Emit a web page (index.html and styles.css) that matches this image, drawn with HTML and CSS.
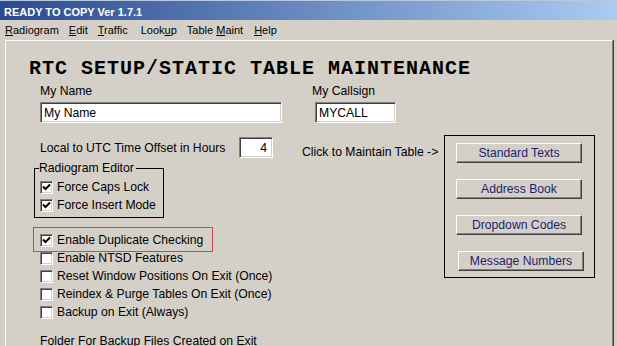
FILE: index.html
```html
<!DOCTYPE html>
<html lang="en">
<head>
    <meta charset="UTF-8">
    <title>READY TO COPY Ver 1.7.1</title>
    <link rel="stylesheet" href="styles.css">
</head>
<body>
    <div class="titlebar">READY TO COPY Ver 1.7.1</div>
    <div class="menubar">
        <span class="menu-item"><u>R</u>adiogram</span>
        <span class="menu-item"><u>E</u>dit</span>
        <span class="menu-item"><u>T</u>raffic</span>
        <span class="menu-item menu-wide">Look<u>u</u>p</span>
        <span class="menu-item">Table <u>M</u>aint</span>
        <span class="menu-item menu-help"><u>H</u>elp</span>
    </div>

    <div class="panel">
        <h1 class="title">RTC SETUP/STATIC TABLE MAINTENANCE</h1>

        <div class="top-row">
            <div class="field field-name">
                <label for="myName">My Name</label>
                <input type="text" id="myName" class="text-input name-input" value="My Name">
            </div>
            <div class="field field-call">
                <label for="myCall">My Callsign</label>
                <input type="text" id="myCall" class="text-input call-input" value="MYCALL">
            </div>
        </div>

        <div class="main">
            <div class="left">
                <div class="offset-row">
                    <label for="utcOffset" class="offset-label">Local to UTC Time Offset in Hours</label>
                    <input type="text" id="utcOffset" class="text-input offset-input" value="4">
                </div>

                <fieldset class="group">
                    <legend>Radiogram Editor</legend>
                    <div class="check-row"><span class="check checked"></span>Force Caps Lock</div>
                    <div class="check-row"><span class="check checked"></span>Force Insert Mode</div>
                </fieldset>

                <div class="checks">
                    <div class="check-row highlight"><span class="check checked"></span>Enable Duplicate Checking</div>
                    <div class="check-row"><span class="check"></span>Enable NTSD Features</div>
                    <div class="check-row"><span class="check"></span>Reset Window Positions On Exit (Once)</div>
                    <div class="check-row"><span class="check"></span>Reindex &amp; Purge Tables On Exit (Once)</div>
                    <div class="check-row"><span class="check"></span>Backup on Exit (Always)</div>
                </div>

                <div class="folder-label">Folder For Backup Files Created on Exit</div>
            </div>

            <div class="right">
                <div class="maintain-label">Click to Maintain Table -&gt;</div>
                <div class="button-box">
                    <button class="btn">Standard Texts</button>
                    <button class="btn">Address Book</button>
                    <button class="btn">Dropdown Codes</button>
                    <button class="btn btn-shift">Message Numbers</button>
                </div>
            </div>
        </div>
    </div>
</body>
</html>
```
FILE: styles.css
```css
body {
    margin: 0;
    width: 617px;
    height: 346px;
    overflow: hidden;
    background-color: #d4d0c8;
    font-family: 'Liberation Sans', Arial, sans-serif;
    font-size: 12.2px;
    color: #000;
}
.titlebar {
    height: 20px;
    box-sizing: border-box;
    padding: 2px 0 0 4px;
    line-height: 18px;
    font-size: 11px;
    font-weight: bold;
    color: #fff;
    background: linear-gradient(to right, #2a4a8e, #a8ccf2);
    border-top: 1px solid #b8c8e0;
}
.menubar {
    height: 20px;
    line-height: 20px;
    font-size: 11px;
    display: flex;
}
.menu-item {
    padding: 0 5px;
}
.menu-item u {
    text-underline-offset: 1px;
}
.menu-wide {
    margin-left: 3px;
}
.menu-help {
    margin-left: 1px;
}
.panel {
    margin-left: 5px;
    width: 606px;
    height: 288px;
    border-top: 1px solid #fff;
    border-left: 1px solid #fff;
    border-right: 1px solid #808080;
    box-shadow: 1px 0 0 #404040;
    padding-top: 18px;
}
.title {
    margin: 0 0 0 23px;
    font-family: 'Liberation Mono', 'Courier New', monospace;
    font-size: 20px;
    font-weight: bold;
    letter-spacing: 1px;
    line-height: 20px;
}
.top-row {
    display: flex;
    margin-top: 5px;
    padding-left: 34px;
}
.field label {
    display: block;
    line-height: 14px;
}
.field-name {
    width: 272px;
}
.field-call .text-input {
    margin-left: 3px;
}
.text-input {
    display: block;
    box-sizing: border-box;
    height: 21px;
    margin-top: 4px;
    padding: 0 3px;
    font-family: 'Liberation Sans', Arial, sans-serif;
    font-size: 12.2px;
    color: #000;
    background-color: #fff;
    border: 1px solid;
    border-color: #808080 #fff #fff #808080;
    box-shadow: inset 1px 1px 0 #404040, inset -1px -1px 0 #d4d0c8;
    outline: none;
}
.name-input {
    width: 242px;
}
.call-input {
    width: 81px;
}
.main {
    display: flex;
    margin-top: 12px;
}
.left {
    width: 268px;
    padding-left: 28px;
}
.offset-row {
    display: flex;
    align-items: center;
    margin: 2px 0 0 6px;
    height: 21px;
}
.offset-label {
    width: 199px;
    white-space: nowrap;
}
.offset-input {
    width: 34px;
    margin-top: 0;
    padding-right: 5px;
    text-align: right;
}
.group {
    width: 130px;
    box-sizing: border-box;
    margin: 3px 0 0 0;
    padding: 3px 0 3px 5px;
    border: 1px solid #000;
}
.group legend {
    padding: 0 2px 0 0;
    margin-left: -1px;
    line-height: 14px;
}
.check-row {
    display: flex;
    align-items: center;
    height: 18px;
    white-space: nowrap;
}
.check {
    width: 13px;
    height: 13px;
    box-sizing: border-box;
    margin-right: 4px;
    background-color: #fff;
    border: 1px solid;
    border-color: #808080 #fff #fff #808080;
    box-shadow: inset 1px 1px 0 #404040, inset -1px -1px 0 #d4d0c8;
}
.check.checked {
    background: #fff url("data:image/svg+xml,%3Csvg xmlns='http://www.w3.org/2000/svg' width='11' height='11'%3E%3Cpath d='M2 4.5 L4.5 7 L9 2.5' fill='none' stroke='black' stroke-width='2'/%3E%3C/svg%3E") no-repeat 0 0;
}
.checks {
    margin: 13px 0 0 6px;
}
/* red frame drawn around the duplicate checking option */
.highlight {
    position: relative;
}
.highlight::after {
    content: "";
    position: absolute;
    left: -7px;
    top: -4px;
    width: 178px;
    height: 23px;
    border: 1px solid #d04848;
}
.folder-label {
    margin: 13px 0 0 6px;
    line-height: 14px;
    white-space: nowrap;
}
.right {
    display: flex;
    align-items: flex-start;
}
.maintain-label {
    width: 142px;
    margin-top: 10px;
    line-height: 14px;
    white-space: nowrap;
}
.button-box {
    width: 151px;
    box-sizing: border-box;
    border: 1px solid #000;
    padding: 7px 0 6px 11px;
    display: flex;
    flex-direction: column;
    align-items: flex-start;
    gap: 16px;
}
.btn {
    width: 126px;
    height: 20px;
    padding: 0;
    font-family: 'Liberation Sans', Arial, sans-serif;
    font-size: 12.2px;
    color: #1e1e6e;
    background-color: #d4d0c8;
    border: 1px solid;
    border-color: #fff #404040 #404040 #fff;
    box-shadow: inset -1px -1px 0 #808080;
}
.btn-shift {
    margin-left: 2px;
}
```
